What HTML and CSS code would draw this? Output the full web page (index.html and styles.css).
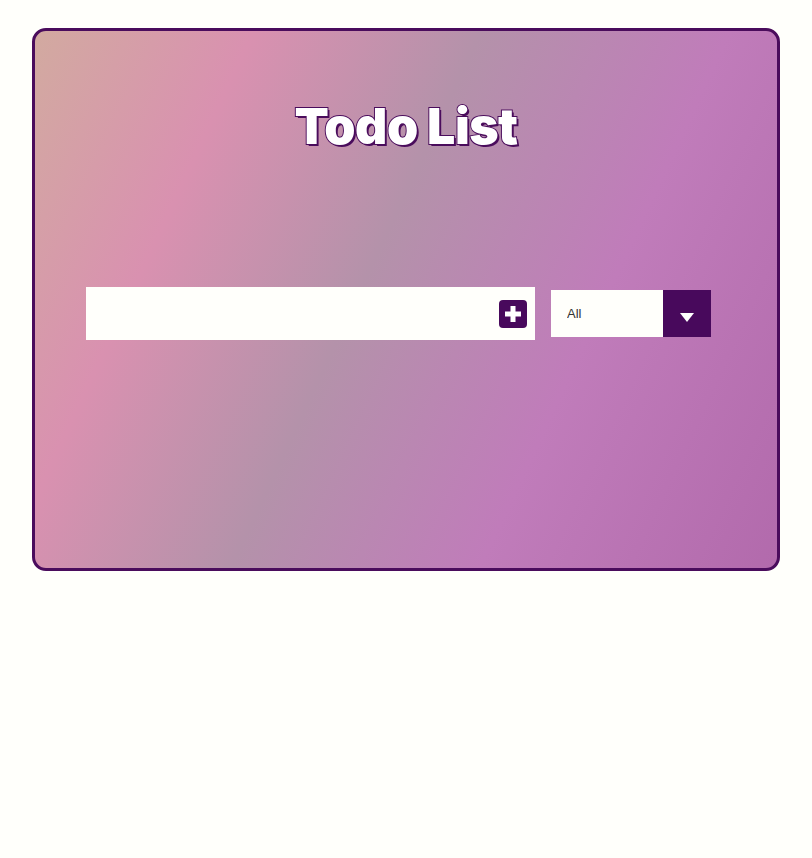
FILE: index.html
```html
<!DOCTYPE html>
<html>
  <head>
    <title>Todo List</title>
    <link rel="stylesheet" href="styles.css">
  </head>
  <body>
    <div class="container">
      <h1>Todo List</h1>

      <form class="todo-form">
        <div class="input-wrap">
          <input type="text" class="todo-input" />
          <button type="submit" class="todo-button">
            <svg width="28" height="28" viewBox="0 0 28 28">
              <rect width="28" height="28" rx="4" fill="#48095c" />
              <path d="M11.5 6h5v5.5H22v5h-5.5V22h-5v-5.5H6v-5h5.5z" fill="#fff" />
            </svg>
          </button>
        </div>
        <div class="select">
          <select class="filter-todo">
            <option value="all">All</option>
            <option value="completed">Completed</option>
            <option value="uncompleted">Uncompleted</option>
          </select>
          <span class="select-arrow"></span>
        </div>
      </form>

      <ul class="todo-list"></ul>
    </div>
  </body>
</html>
```

FILE: styles.css
```css
* {
  box-sizing: border-box;
}

body {
  margin: 0;
  padding: 28px 32px;
  background: #fffffb;
  font-family: 'Liberation Sans', Arial, sans-serif;
}

.container {
  height: 543px;
  border: 3px solid #4a0c5c;
  border-radius: 14px;
  background: linear-gradient(
    115deg,
    #d2aaa0 0%,
    #d991b0 22%,
    #b492aa 45%,
    #c07cba 70%,
    #b26aac 100%
  );
  padding-top: 66px;
}

h1 {
  margin: 0;
  text-align: center;
  font-family: Inter, 'Noto Sans', sans-serif;
  font-weight: 900;
  font-size: 50px;
  letter-spacing: -0.5px;
  line-height: 58px;
  color: #fff;
  -webkit-text-stroke: 2px #4a0c5c;
  paint-order: stroke fill;
  text-shadow: 2px 2px 0 #4a0c5c;
}

.todo-form {
  display: flex;
  align-items: center;
  gap: 16px;
  margin-top: 132px;
  padding-left: 51px;
}

.input-wrap {
  display: flex;
  align-items: center;
  width: 449px;
  height: 53px;
  background: #fffffb;
}

.todo-input {
  flex: 1;
  height: 100%;
  border: none;
  outline: none;
  background: transparent;
  padding: 0 12px;
  font-size: 16px;
}

.todo-button {
  display: flex;
  border: none;
  background: none;
  padding: 0;
  margin-right: 8px;
  cursor: pointer;
}

.select {
  position: relative;
  width: 160px;
  height: 47px;
  background: #fffffb;
}

.filter-todo {
  appearance: none;
  width: 100%;
  height: 100%;
  border: none;
  outline: none;
  background: transparent;
  padding: 0 16px;
  font-family: 'Liberation Sans', Arial, sans-serif;
  font-size: 13px;
  color: #333;
  cursor: pointer;
}

.select-arrow {
  position: absolute;
  top: 0;
  right: 0;
  width: 48px;
  height: 100%;
  background: #48095c;
  pointer-events: none;
}

.select-arrow::after {
  content: '';
  position: absolute;
  left: 17px;
  top: 23px;
  border-left: 7px solid transparent;
  border-right: 7px solid transparent;
  border-top: 9px solid #fff;
}

.todo-list {
  list-style: none;
  margin: 0;
  padding: 0;
}
```
